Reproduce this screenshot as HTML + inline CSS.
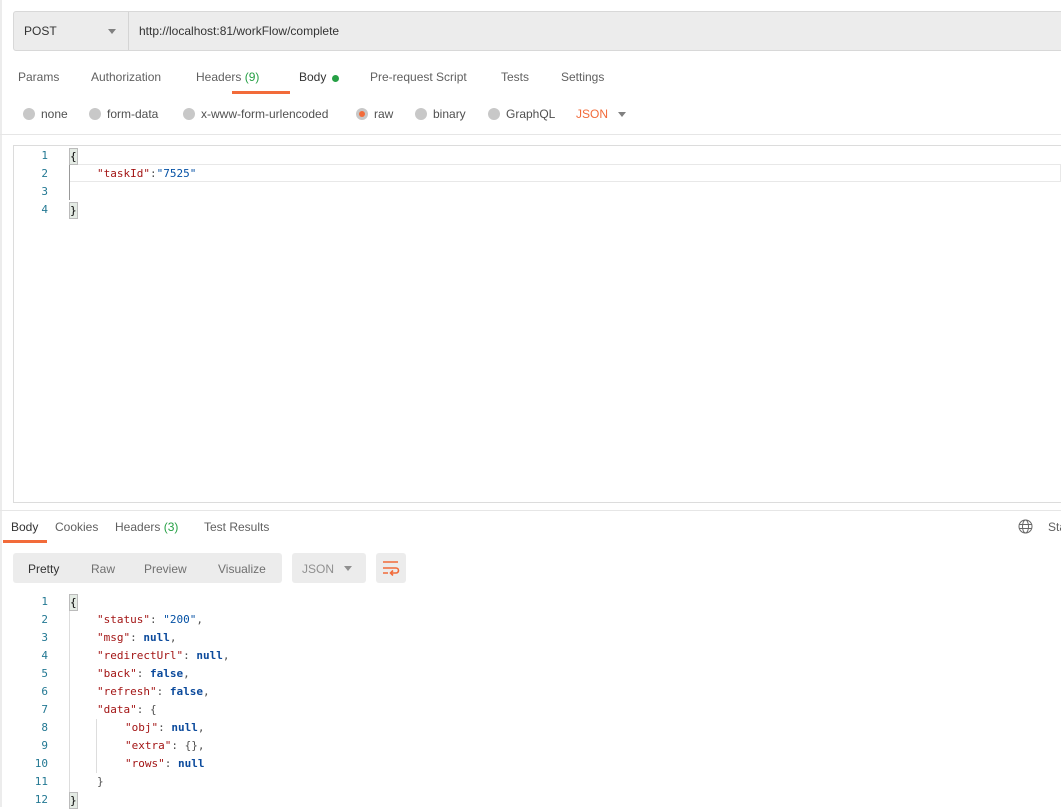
<!DOCTYPE html>
<html><head><meta charset="utf-8"><style>
*{box-sizing:border-box;margin:0;padding:0}
body{width:1061px;height:807px;overflow:hidden;background:#fff;font-family:"Liberation Sans",sans-serif;font-size:12px;color:#505050;position:relative}
.abs{position:absolute}
.mono{font-family:"DejaVu Sans Mono","Liberation Mono",monospace;font-size:11px}
.k{color:#a31515}.s{color:#0451a5}.b{color:#0b4a9c;font-weight:bold}
.ln{position:absolute;width:20px;text-align:right;color:#237893}
.tab{position:absolute;top:70px;color:#606060;font-size:12px}
.radio{position:absolute;top:108px;width:12px;height:12px;border-radius:50%;background:#c8c8c8}
.rl{position:absolute;top:107px;color:#505050}
</style></head><body>
<div class="abs" style="left:0;top:0;width:2px;height:807px;background:#ececec"></div>
<!-- URL bar -->
<div class="abs" style="left:13px;top:11px;width:1060px;height:40px;background:#ececec;border:1px solid #d8d8d8;border-radius:3px"></div>
<div class="abs" style="left:128px;top:12px;width:1px;height:38px;background:#d4d4d4"></div>
<div class="abs" style="left:24px;top:24px;color:#333">POST</div>
<div class="abs" style="left:108px;top:29px;width:0;height:0;border-left:4px solid transparent;border-right:4px solid transparent;border-top:5px solid #808080"></div>
<div class="abs" style="left:139px;top:24px;color:#333">http://localhost:81/workFlow/complete</div>
<!-- tabs -->
<div class="tab" style="left:18px">Params</div>
<div class="tab" style="left:91px">Authorization</div>
<div class="tab" style="left:196px">Headers <span style="color:#26a045">(9)</span></div>
<div class="tab" style="left:299px;color:#333">Body</div>
<div class="abs" style="left:332px;top:75px;width:7px;height:7px;border-radius:50%;background:#26a045"></div>
<div class="abs" style="left:232px;top:91px;width:58px;height:3px;background:#f26b3a"></div>
<div class="tab" style="left:370px">Pre-request Script</div>
<div class="tab" style="left:501px">Tests</div>
<div class="tab" style="left:561px">Settings</div>
<!-- radios -->
<div class="radio" style="left:23px"></div><div class="rl" style="left:41px">none</div>
<div class="radio" style="left:89px"></div><div class="rl" style="left:107px">form-data</div>
<div class="radio" style="left:183px"></div><div class="rl" style="left:201px">x-www-form-urlencoded</div>
<div class="radio" style="left:356px"></div><div class="abs" style="left:359px;top:111px;width:6px;height:6px;border-radius:50%;background:#f26b3a"></div><div class="rl" style="left:374px">raw</div>
<div class="radio" style="left:415px"></div><div class="rl" style="left:433px">binary</div>
<div class="radio" style="left:488px"></div><div class="rl" style="left:506px">GraphQL</div>
<div class="rl" style="left:576px;color:#f26b3a">JSON</div>
<div class="abs" style="left:618px;top:112px;border-left:4px solid transparent;border-right:4px solid transparent;border-top:5px solid #808080"></div>
<div class="abs" style="left:0;top:134px;width:1061px;height:1px;background:#e6e6e6"></div>
<!-- editor -->
<div class="abs" style="left:13px;top:145px;width:1060px;height:358px;border:1px solid #dcdcdc"></div>
<div class="abs" style="left:70px;top:164px;width:991px;height:18px;border:1px solid #e8e8e8;border-left:none"></div>
<div class="abs" style="left:69px;top:164px;width:1px;height:36px;background:#999"></div>
<div class="abs mono" style="left:0;top:147px;line-height:18px;width:1061px">
<div class="ln" style="left:28px;top:0">1</div><div class="ln" style="left:28px;top:18px">2</div><div class="ln" style="left:28px;top:36px">3</div><div class="ln" style="left:28px;top:54px">4</div>
<div class="abs" style="left:69px;top:1px;background:#e4ebe4;border:1px solid #bbb;line-height:15px;color:#000">{</div>
<div class="abs" style="left:97px;top:18px"><span class="k">"taskId"</span>:<span class="s">"7525"</span></div>
<div class="abs" style="left:69px;top:55px;background:#e4ebe4;border:1px solid #bbb;line-height:15px;color:#000">}</div>
</div>
<!-- response -->
<div class="abs" style="left:0;top:510px;width:1061px;height:1px;background:#e6e6e6"></div>
<div class="abs" style="left:11px;top:520px;color:#333">Body</div>
<div class="abs" style="left:55px;top:520px;color:#606060">Cookies</div>
<div class="abs" style="left:115px;top:520px;color:#606060">Headers <span style="color:#26a045">(3)</span></div>
<div class="abs" style="left:204px;top:520px;color:#606060">Test Results</div>
<div class="abs" style="left:3px;top:540px;width:44px;height:3px;background:#f26b3a"></div>
<svg class="abs" style="left:1018px;top:519px" width="15" height="15" viewBox="0 0 15 15" fill="none" stroke="#666" stroke-width="1"><circle cx="7.5" cy="7.5" r="6.5"/><ellipse cx="7.5" cy="7.5" rx="3" ry="6.5"/><path d="M1 5.5h13M1 9.5h13"/></svg>
<div class="abs" style="left:1048px;top:520px;color:#606060">Sta</div>
<div class="abs" style="left:13px;top:553px;width:269px;height:30px;background:#ececec;border-radius:3px"></div>
<div class="abs" style="left:28px;top:562px;color:#333">Pretty</div>
<div class="abs" style="left:91px;top:562px;color:#707070">Raw</div>
<div class="abs" style="left:144px;top:562px;color:#707070">Preview</div>
<div class="abs" style="left:218px;top:562px;color:#707070">Visualize</div>
<div class="abs" style="left:292px;top:553px;width:74px;height:30px;background:#ececec;border-radius:3px"></div>
<div class="abs" style="left:302px;top:562px;color:#909090">JSON</div>
<div class="abs" style="left:344px;top:566px;border-left:4px solid transparent;border-right:4px solid transparent;border-top:5px solid #909090"></div>
<div class="abs" style="left:376px;top:553px;width:30px;height:30px;background:#ececec;border-radius:3px"></div>
<svg class="abs" style="left:382px;top:560px" width="18" height="16" viewBox="0 0 18 16" fill="none" stroke="#f26b3a" stroke-width="1.6"><path d="M1 2h15M1 8h13a2.5 2.5 0 0 1 0 5h-5M1 13h5M11 10.5l-2.5 2.5 2.5 2.5"/></svg>
<div class="abs" style="left:69px;top:611px;width:1px;height:181px;background:#ddd"></div>
<div class="abs" style="left:96px;top:719px;width:1px;height:54px;background:#ddd"></div>
<div class="abs mono" style="left:0;top:593px;line-height:18px;width:1061px">
<div class="ln" style="left:28px;top:0">1</div><div class="ln" style="left:28px;top:18px">2</div><div class="ln" style="left:28px;top:36px">3</div><div class="ln" style="left:28px;top:54px">4</div><div class="ln" style="left:28px;top:72px">5</div><div class="ln" style="left:28px;top:90px">6</div><div class="ln" style="left:28px;top:108px">7</div><div class="ln" style="left:28px;top:126px">8</div><div class="ln" style="left:28px;top:144px">9</div><div class="ln" style="left:28px;top:162px">10</div><div class="ln" style="left:28px;top:180px">11</div><div class="ln" style="left:28px;top:198px">12</div>
<div class="abs" style="left:69px;top:1px;background:#e4ebe4;border:1px solid #bbb;line-height:15px;color:#000">{</div>
<div class="abs" style="left:97px;top:18px"><span class="k">"status"</span>: <span class="s">"200"</span>,</div>
<div class="abs" style="left:97px;top:36px"><span class="k">"msg"</span>: <span class="b">null</span>,</div>
<div class="abs" style="left:97px;top:54px"><span class="k">"redirectUrl"</span>: <span class="b">null</span>,</div>
<div class="abs" style="left:97px;top:72px"><span class="k">"back"</span>: <span class="b">false</span>,</div>
<div class="abs" style="left:97px;top:90px"><span class="k">"refresh"</span>: <span class="b">false</span>,</div>
<div class="abs" style="left:97px;top:108px"><span class="k">"data"</span>: {</div>
<div class="abs" style="left:125px;top:126px"><span class="k">"obj"</span>: <span class="b">null</span>,</div>
<div class="abs" style="left:125px;top:144px"><span class="k">"extra"</span>: {},</div>
<div class="abs" style="left:125px;top:162px"><span class="k">"rows"</span>: <span class="b">null</span></div>
<div class="abs" style="left:97px;top:180px">}</div>
<div class="abs" style="left:69px;top:199px;background:#e4ebe4;border:1px solid #bbb;line-height:15px;color:#000">}</div>
</div>
</body></html>
